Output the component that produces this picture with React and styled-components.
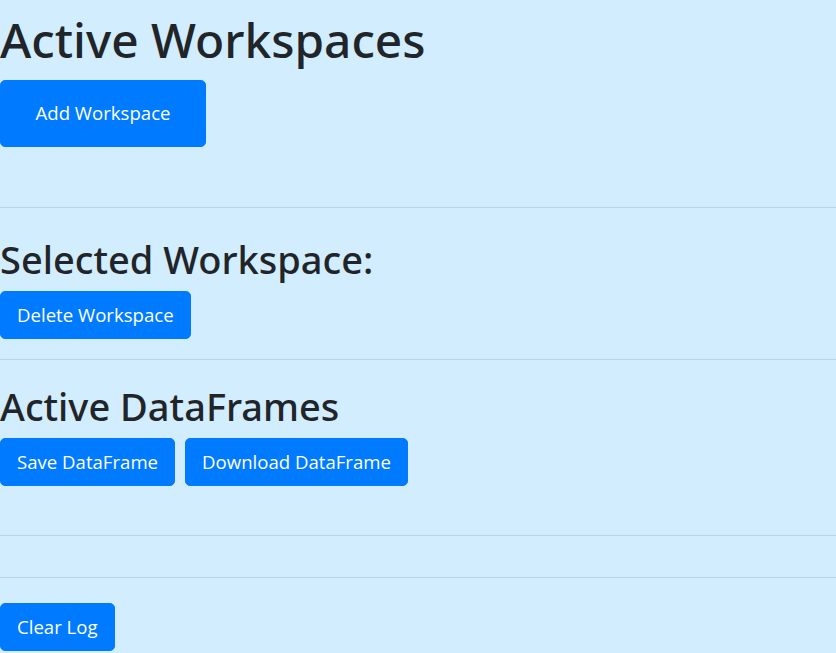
import React from "react";
import styled, { createGlobalStyle } from "styled-components";

const GlobalStyle = createGlobalStyle`
  html, body {
    margin: 0;
    padding: 0;
    background: #d2edfd;
  }
  body {
    font-family: "Open Sans", "Noto Sans", "Liberation Sans", sans-serif;
    color: #212529;
  }
`;

const Page = styled.div`
  display: flex;
  flex-direction: column;
  min-height: 653px;
`;

const Section = styled.section`
  display: flex;
  flex-direction: column;
  align-items: flex-start;
  padding-top: ${(p) => p.$top || 0}px;
  padding-bottom: ${(p) => p.$bottom || 0}px;
`;

const Title = styled.h1`
  margin: 0 0 ${(p) => p.$gap || 10}px;
  font-family: "Noto Sans", "Open Sans", sans-serif;
  font-size: ${(p) => (p.$big ? 47.8 : 38)}px;
  font-weight: 500;
  line-height: ${(p) => (p.$big ? 56 : 44)}px;
`;

const ButtonRow = styled.div`
  display: flex;
  gap: 10px;
`;

const Button = styled.button`
  font-family: inherit;
  font-size: 18.6px;
  line-height: 30px;
  color: #fff;
  background: #007bff;
  border: 1px solid #007bff;
  border-radius: 5px;
  padding: ${(p) => (p.$large ? "17px 34.5px 18px" : "8px 16px")};
  cursor: pointer;
`;

const Rule = styled.hr`
  width: 100%;
  margin: ${(p) => p.$top || 20}px 0 20px;
  border: 0;
  border-top: 1px solid rgba(0, 0, 0, 0.1);
`;

export default function App() {
  return (
    <Page>
      <GlobalStyle />
      <Section $top={12} $bottom={40}>
        <Title $big $gap={12}>Active Workspaces</Title>
        <Button $large>Add Workspace</Button>
      </Section>
      <Rule />
      <Section $top={9}>
        <Title as="h2" $gap={10}>Selected Workspace:</Title>
        <Button>Delete Workspace</Button>
      </Section>
      <Rule />
      <Section $top={4} $bottom={29}>
        <Title as="h2" $gap={10}>Active DataFrames</Title>
        <ButtonRow>
          <Button>Save DataFrame</Button>
          <Button>Download DataFrame</Button>
        </ButtonRow>
      </Section>
      <Rule />
      <Rule $top={21} />
      <Section $top={5}>
        <Button>Clear Log</Button>
      </Section>
    </Page>
  );
}
